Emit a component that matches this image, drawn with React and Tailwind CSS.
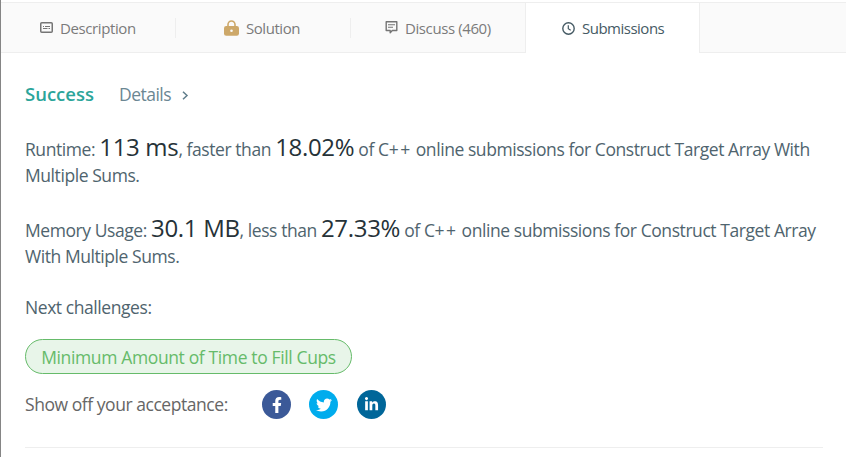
import { FaFacebookF, FaTwitter, FaLinkedinIn } from "react-icons/fa";

function DescriptionIcon() {
  return (
    <svg width="13" height="11" viewBox="0 0 13 11" fill="none" stroke="#757575">
      <rect x="0.75" y="0.75" width="11.5" height="9.5" rx="1" strokeWidth="1.5" />
      <path d="M3 4.5h1M5 4.5h5M3 6.5h4.5M8.5 6.5h1.5" strokeWidth="1" />
    </svg>
  );
}

function LockIcon() {
  return (
    <svg width="15" height="16" viewBox="0 0 15 16">
      <path d="M4 7V4.5a3.5 3.5 0 0 1 7 0V7" fill="none" stroke="#cda869" strokeWidth="1.6" />
      <rect x="0" y="6" width="15" height="9.7" rx="2.2" fill="#cda869" />
      <circle cx="7.5" cy="10.7" r="1.3" fill="#fafafa" />
    </svg>
  );
}

function DiscussIcon() {
  return (
    <svg width="13" height="13" viewBox="0 0 13 13" fill="none" stroke="#757575">
      <path d="M1.2.7h10.6v8.8H7.3L5.2 11.8V9.5h-4z" strokeWidth="1.4" strokeLinejoin="round" />
      <path d="M3 3.8h7M3 6.2h5" strokeWidth="1.1" />
    </svg>
  );
}

function ClockIcon() {
  return (
    <svg width="13" height="13" viewBox="0 0 13 13" fill="none" stroke="#455a64">
      <circle cx="6.5" cy="6.5" r="5.7" strokeWidth="1.4" />
      <path d="M6.3 3.2v3.5l2.4 1.5" strokeWidth="1.2" />
    </svg>
  );
}

function Big({ children }) {
  return <span className="text-[24px] tracking-[-0.32px] text-[#263238]">{children}</span>;
}

function Cpp() {
  return (
    <>
      C<span className="tracking-[1.5px]">++</span>
    </>
  );
}

export default function App() {
  return (
    <div className="h-[457px] w-[846px] overflow-hidden border-l border-[#858585] bg-white pt-[2px] font-['Open_Sans','Noto_Sans',sans-serif] text-[17.5px] text-[#4f646e]">
      <nav className="flex h-[51px] border-t border-[#eeeeee] text-[15px] text-[#7a7a7a]">
        <div className="flex w-[524px] items-center border-b border-[#eeeeee] bg-[#fafafa]">
          <div className="flex h-5 w-[175px] items-center border-r border-[#eeeeee] pl-[39px]">
            <DescriptionIcon />
            <span className="ml-[7px] mt-[2px] whitespace-nowrap tracking-[-0.4px]">Description</span>
          </div>
          <div className="flex h-5 w-[175px] items-center border-r border-[#eeeeee] pl-[48px]">
            <LockIcon />
            <span className="ml-[7px] mt-[2px] whitespace-nowrap tracking-[-0.45px]">Solution</span>
          </div>
          <div className="flex h-5 items-center pl-[34px]">
            <DiscussIcon />
            <span className="ml-[7px] mt-[2px] whitespace-nowrap tracking-[-0.4px]">Discuss (460)</span>
          </div>
        </div>
        <div className="flex w-[175px] items-center border-x border-[#eeeeee] bg-white pl-[36px] text-[#455a64]">
          <ClockIcon />
          <span className="ml-[7px] whitespace-nowrap tracking-[-0.5px]">Submissions</span>
        </div>
        <div className="flex-1 border-b border-[#eeeeee] bg-[#fafafa]" />
      </nav>
      <main className="pl-6 pr-[23px]">
        <div className="mt-[28px] flex h-[26px] items-center">
          <span className="text-[18.5px] font-semibold text-[#2ba59a]">Success</span>
          <span className="ml-[25px] tracking-[-0.5px] text-[#6b8793]">Details</span>
          <svg className="ml-[11px] mt-[3px]" width="7" height="9" viewBox="0 0 7 9" fill="none" stroke="#607d8b" strokeWidth="1.5">
            <path d="M1 .7l4 3.8-4 3.8" />
          </svg>
        </div>
        <p className="mt-[27px] whitespace-nowrap leading-[26px] tracking-[-0.43px]">
          Runtime: <Big>113 ms</Big>, faster than <Big>18.02%</Big> of <Cpp /> online submissions for Construct Target Array With
          <br />
          Multiple Sums.
        </p>
        <p className="mt-[27px] whitespace-nowrap leading-[26px] tracking-[-0.43px]">
          Memory Usage: <Big>30.1 MB</Big>, less than <Big>27.33%</Big> of <Cpp /> online submissions for Construct Target Array
          <br />
          With Multiple Sums.
        </p>
        <p className="mt-[25px] leading-[26px] tracking-[-0.43px]">Next challenges:</p>
        <div className="mt-[19px] flex h-[35px] w-[327px] items-center justify-center whitespace-nowrap rounded-full border border-[#66bb6a] bg-[#e8f5e9] pt-px tracking-[-0.37px] text-[#66bb6a]">
          Minimum Amount of Time to Fill Cups
        </div>
        <div className="mt-[16px] flex h-[29px] items-center">
          <span className="w-[237px] whitespace-nowrap tracking-[-0.45px] text-[#666666]">Show off your acceptance:</span>
          <span className="flex size-[29px] items-center justify-center rounded-full bg-[#3b5998] text-white">
            <FaFacebookF size={16} />
          </span>
          <span className="ml-[18px] flex size-[29px] items-center justify-center rounded-full bg-[#00aced] text-white">
            <FaTwitter size={16} />
          </span>
          <span className="ml-[19px] flex size-[29px] items-center justify-center rounded-full bg-[#006699] text-white">
            <FaLinkedinIn size={15} />
          </span>
        </div>
        <div className="mt-[28px] border-t border-[#eeeeee]" />
      </main>
    </div>
  );
}
